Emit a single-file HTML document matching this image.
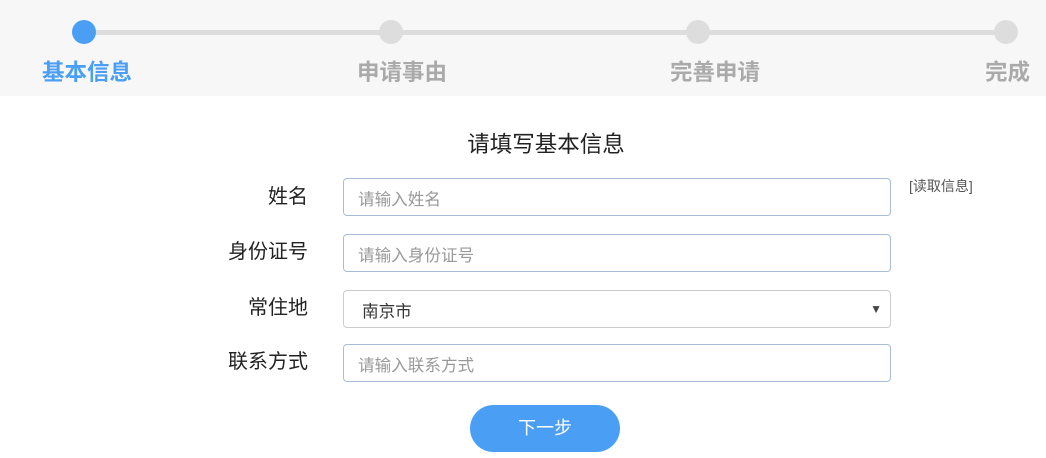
<!DOCTYPE html><html><head><meta charset="utf-8"><style>
body{margin:0;width:1046px;height:458px;background:#fff;font-family:"Liberation Sans","Noto Sans CJK SC",sans-serif;position:relative;overflow:hidden}
.hd{position:absolute;left:0;top:0;width:1046px;height:96px;background:#f7f7f7}
.line{position:absolute;left:84px;top:30px;width:922px;height:5px;background:#ddd}
.dot{position:absolute;top:20px;width:24px;height:24px;border-radius:50%;background:#ddd}
.st{position:absolute;top:58px;font-size:22.5px;font-weight:bold;color:#aaa;line-height:30px}
.title{position:absolute;top:127px;left:0;width:1092px;text-align:center;font-size:22.5px;color:#222}
.lb{position:absolute;right:738px;font-size:20px;color:#222;line-height:26px}
.in{position:absolute;left:343px;width:546px;height:36px;border:1px solid #a9bcd6;border-radius:4px;box-sizing:content-box;font-size:16.6px;color:#999;line-height:42px;text-indent:14px}
.btn{position:absolute;left:470px;top:405px;width:150px;height:47px;border-radius:24px;background:#4a9ff5;color:#fff;font-size:18px;text-align:center;line-height:47px}
</style></head><body>
<div class="hd"><div class="line"></div>
<div class="dot" style="left:72px;background:#4a9ff5"></div>
<div class="dot" style="left:379px"></div>
<div class="dot" style="left:686px"></div>
<div class="dot" style="left:994px"></div>
<div class="st" style="left:42px;color:#4a9ff5">基本信息</div>
<div class="st" style="left:357px">申请事由</div>
<div class="st" style="left:670px">完善申请</div>
<div class="st" style="left:985px">完成</div>
</div>
<div class="title">请填写基本信息</div>
<div class="lb" style="top:184px">姓名</div>
<div class="lb" style="top:239px">身份证号</div>
<div class="lb" style="top:295px">常住地</div>
<div class="lb" style="top:349px">联系方式</div>
<div class="in" style="top:178px">请输入姓名</div>
<div style="position:absolute;left:909px;top:176px;font-size:14px;color:#555">[读取信息]</div>
<div class="in" style="top:234px">请输入身份证号</div>
<div class="in" style="top:290px;border-color:#ccc;color:#333;text-indent:18px">南京市<span style="position:absolute;right:8px;top:-3px;font-size:12px;color:#444">▼</span></div>
<div class="in" style="top:344px">请输入联系方式</div>
<div class="btn">下一步</div>
</body></html>
